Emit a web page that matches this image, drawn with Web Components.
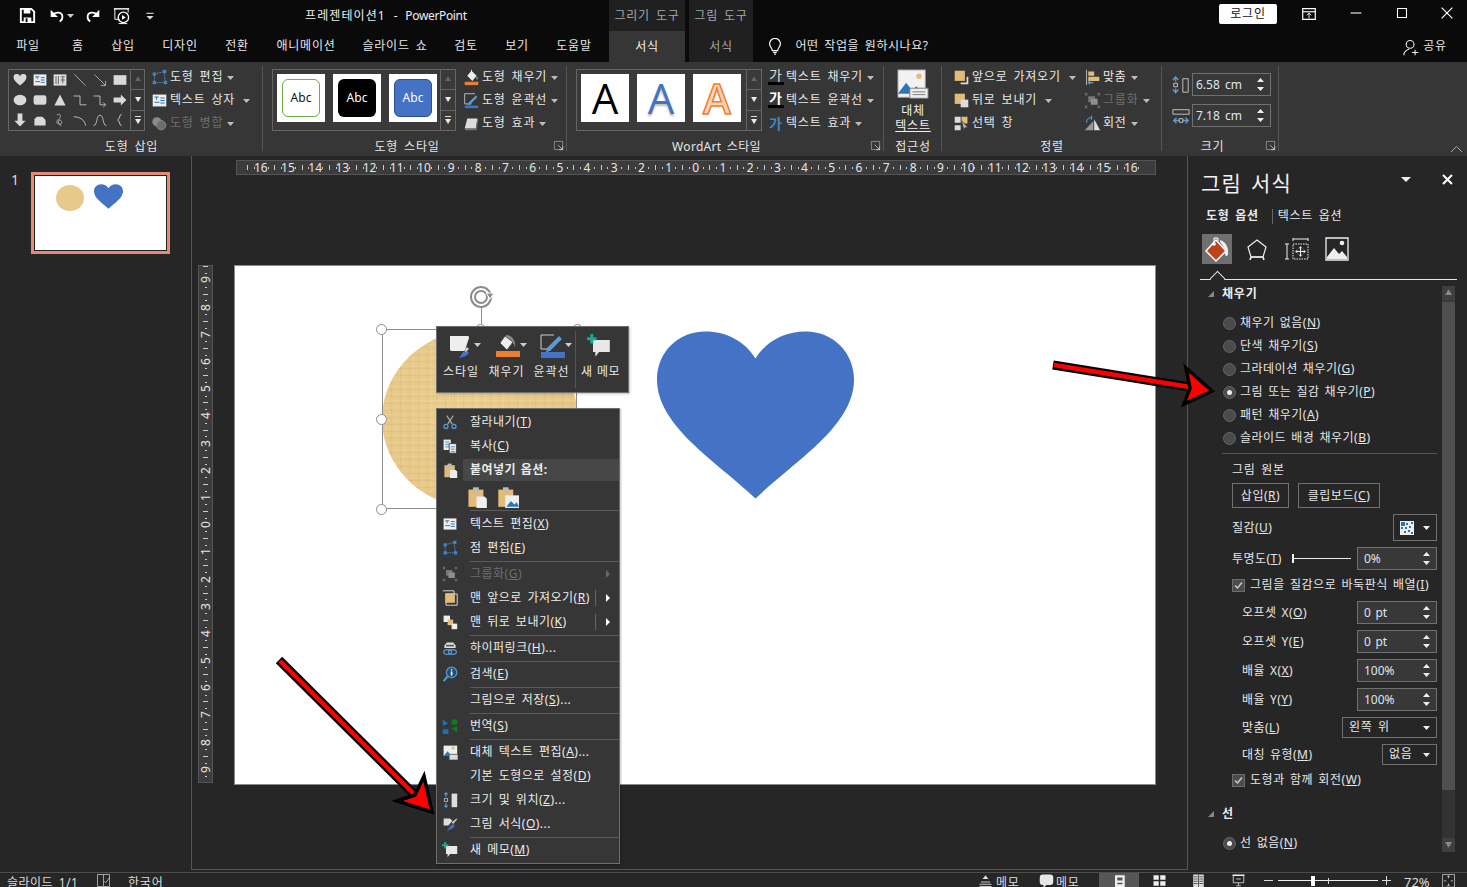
<!DOCTYPE html>
<html lang="ko"><head><meta charset="utf-8"><title>PowerPoint</title>
<style>html,body{margin:0;padding:0;background:#262626;overflow:hidden}
body{font:12px/1.2 "Noto Sans","Noto Sans CJK KR",sans-serif;color:#e8e8e8;letter-spacing:.8px;word-spacing:2px}</style>
</head><body>
<pp-app></pp-app>
<script>
const W='#f2f2f2',G='#d9d9d9',B='#2e75b6',O='#ed7d31',T='#e2bb7b';
const I={
save:`<path d="M3 3h11l3 3v11H3z" fill="none" stroke="#fff" stroke-width="2"/><path d="M6 3h7v5H6zM6 12h8v5H6z" fill="#fff"/><path d="M8 13h2v4H8z" fill="#0a0a0a"/>`,
undo:`<path d="M5 9c3-4 11-4 11 2 0 2-1 4-3 5" fill="none" stroke="#fff" stroke-width="2"/><path d="M3 3v8h8z" fill="#fff"/>`,
redo:`<path d="M15 9c-3-4-11-4-11 2 0 2 1 4 3 5" fill="none" stroke="#fff" stroke-width="2"/><path d="M17 3v8H9z" fill="#fff"/>`,
showq:`<path d="M2 3h16" stroke="#fff" stroke-width="1.5"/><path d="M3 3v11h5M17 3v4" fill="none" stroke="#fff"/><circle cx="12" cy="12" r="5.5" fill="none" stroke="#fff" stroke-width="1.4"/><path d="M10.5 9.5l4 2.5-4 2.5z" fill="#fff"/><path d="M7 18.5h9" stroke="#fff"/>`,
more:`<path d="M6 7h8" stroke="#ddd" stroke-width="1.2"/><path d="M6 10h8l-4 4z" fill="#ddd"/>`,
ribopt:`<path d="M3 4h14v12H3z" fill="none" stroke="#fff" stroke-width="1.3"/><path d="M3 7.5h14" stroke="#fff" stroke-width="1.3"/><path d="M10 9v6M7.5 11.5L10 9l2.5 2.5" fill="none" stroke="#fff"/>`,
min:`<path d="M4 10h12" stroke="#fff" stroke-width="1.2"/>`,
max:`<path d="M5 5h10v10H5z" fill="none" stroke="#fff" stroke-width="1.2"/>`,
close:`<path d="M4 4l12 12M16 4L4 16" stroke="#fff" stroke-width="1.3"/>`,
bulb:`<path d="M7 14c0-3-3-4-3-7.500a6 6 0 0 1 12 0C16 10 13 11 13 14z" fill="none" stroke="#fff" stroke-width="1.3"/><path d="M8 16h4M9 18h2" stroke="#fff" stroke-width="1.3"/>`,
user:`<circle cx="9" cy="6" r="4.300" fill="none" stroke="#eee" stroke-width="1.200"/><path d="M2 18c0-4 3-6 6-7" fill="none" stroke="#eee" stroke-width="1.200"/><path d="M11 15h7M14.500 12v6" stroke="#eee" stroke-width="1.200"/>`,
heart:`<path d="M10 17C5 13 2 10 2 7a4 4 0 0 1 8-1 4 4 0 0 1 8 1c0 3-3 6-8 10z" fill="${G}"/>`,
txh:`<path d="M2 3h16v14H2z" fill="#eee"/><path d="M4 6h5M6.500 6v3M4 12h6M11 7h5M11 10h5M11 13h5" stroke="#2e75b6" stroke-width="1.200"/>`,
txv:`<path d="M2 3h16v14H2z" fill="#ddd"/><path d="M5 5v10M8 5v10M11 6h5M13.500 6v8" stroke="#555" stroke-width="1.100"/><path d="M11 10h5" stroke="#2e75b6" stroke-width="1.500"/>`,
line:`<path d="M3 3l14 14" stroke="#bbb"/>`,
aline:`<path d="M3 3l14 14M17 11v6h-6" fill="none" stroke="#bbb"/>`,
rect:`<path d="M2 4h16v12H2z" fill="${G}"/>`,
ell:`<ellipse cx="10" cy="10" rx="8" ry="6.500" fill="${G}"/>`,
rrect:`<rect x="2" y="4" width="16" height="12" rx="3" fill="${G}"/>`,
tri:`<path d="M10 3l7 14H3z" fill="${G}"/>`,
elbow:`<path d="M2 5h8v11h8" fill="none" stroke="#bbb" stroke-width="1.200"/>`,
elbowa:`<path d="M2 5h8v11h7M14 13l3 3-3 3" fill="none" stroke="#bbb" stroke-width="1.200"/>`,
rarrow:`<path d="M2 7h9V3l7 7-7 7v-4H2z" fill="${G}"/>`,
darrow:`<path d="M7 2h6v9h4l-7 7-7-7h4z" fill="${G}"/>`,
snip:`<path d="M3 17V9l3-3h7l4 4v7z" fill="${G}"/>`,
scrib:`<path d="M6 4c3-3 7 0 3 4s-4 6 0 7 4-4 1-5-3 6 2 7" fill="none" stroke="#bbb" stroke-width="1.100"/>`,
arc:`<path d="M2 6c8 0 14 4 15 11" fill="none" stroke="#bbb" stroke-width="1.200"/>`,
curve:`<path d="M2 17c5 0 3-13 8-13s3 13 8 13" fill="none" stroke="#bbb" stroke-width="1.200"/>`,
brace:`<path d="M12 3c-3 0-2 6-5 7 3 1 2 7 5 7" fill="none" stroke="#ccc" stroke-width="1.200"/>`,
pts:`<path d="M4 6l11-3 2 13-13 0z" fill="none" stroke="#5b9bd5" stroke-dasharray="2 1"/><path d="M2 4h4v4H2zM14 1h4v4h-4zM2 14h4v4H2zM15 14h4v4h-4z" fill="#3a85d0"/>`,
merge:`<circle cx="7" cy="8" r="5.500" fill="#8a8a8a"/><circle cx="12" cy="12" r="5.500" fill="#6d6d6d" stroke="#8a8a8a"/>`,
fill:`<path d="M10 2l6 6-5 6-6-6z" fill="#eee"/><path d="M10 7V1" stroke="#eee"/><path d="M16 8c1 2 2 3 1 4s-2-1-1-4z" fill="#6fa8dc"/><path d="M2 15h16v4H2z" fill="${O}"/>`,
pen:`<path d="M2 2h12M2 2v12h8" fill="none" stroke="#ccc"/><path d="M6 13l9-9 2 2-9 9-3 1z" fill="#5b9bd5"/><path d="M2 16h16v3H2z" fill="#4472c4"/>`,
effect:`<path d="M5 4h12l-2 12H2z" fill="#ddd"/><path d="M2 16h13l2-12 1 1-2 13H3z" fill="#777"/>`,
front:`<path d="M2 2h12v12H2z" fill="${T}"/><path d="M16 9h2v9H9v-2h7z" fill="#ddd"/>`,
back:`<path d="M2 2h12v12H2z" fill="${T}"/><path d="M9 9h9v9H9z" fill="#ddd"/>`,
pane:`<path d="M2 2h7v7H2zM2 12h7v6H2z" fill="#ddd"/><path d="M10 2h7v8h-7z" fill="${T}"/><path d="M10 7l8 8-4 0-1 4z" fill="#bbb" stroke="#333"/>`,
align:`<path d="M3 1v18" stroke="#ccc"/><path d="M5 3h7v5H5zM5 9h13v5H5z" fill="${T}"/><path d="M11 16H5M7 14l-2 2 2 2" fill="none" stroke="#5b9bd5" stroke-width="1.300"/>`,
group:`<path d="M5 5h8v7H5z" fill="#777"/><path d="M8 8h8v7H8z" fill="#8f8f8f"/><path d="M1 1h3v3H1zM16 1h3v3h-3zM1 16h3v3H1zM16 16h3v3h-3z" fill="#666"/>`,
rotate:`<path d="M11 7v11H1z" fill="#999"/><path d="M12 5l7 13h-7z" fill="#ddd"/><path d="M3 9c0-4 3-6 6-6M9 1v4h-1" fill="none" stroke="#5b9bd5" stroke-width="1.300"/>`,
hsize:`<path d="M12 3h6v15h-6z" fill="none" stroke="#ccc"/><path d="M4 6V2M1 4.500L4 1l3 3.500M4 14v4M1 15l3 3.500 3-3.500" fill="none" stroke="#5b9bd5" stroke-width="1.500"/><path d="M2 8h4v4H2z" fill="none" stroke="#ccc"/>`,
wsize:`<path d="M1 3h18v5H1z" fill="none" stroke="#ccc"/><path d="M3 15h14M5 12l-3 3 3 3M15 12l3 3-3 3" fill="none" stroke="#5b9bd5" stroke-width="1.500"/><path d="M8 13h4v4H8z" fill="#333" stroke="#ccc"/>`,
launch:`<path d="M2 2h12v12H2z" fill="none" stroke="#aaa"/><path d="M7 7l7 7M14 9v5H9" fill="none" stroke="#ddd"/>`,
alt:`<path d="M1 1h30v30H1z" fill="#f2f2f2" stroke="#999"/><circle cx="24" cy="8" r="3" fill="${T}"/><path d="M1 27l9-12 7 9 4-5 8 8z" fill="#2e75b6"/><path d="M14 21h20v11H14z" fill="#eee" stroke="#777"/><path d="M17 25h14M17 28h14" stroke="#777"/>`,
style:`<path d="M1 2h18c1 0 1 1 1 2l-4 12c-1 1-2 1-3 1H3c-2 0-2-1-2-2z" fill="#eee"/><path d="M10 24l4-6 3-2 3 3-3 3z" fill="#4472c4"/><path d="M15 16l3-3 2 2-3 3z" fill="#ccc"/>`,
mfill:`<path d="M10 2l8 6-6 8-7-7z" fill="#eee" stroke="#555"/><path d="M11 1c6 0 10 6 9 12-1-4-4-8-9-10z" fill="#888"/><path d="M1 17h24v6H1z" fill="${O}"/>`,
mpen:`<path d="M1 1h13M1 1v14h8" fill="none" stroke="#ccc"/><path d="M7 14L19 2l3 3-12 12-4 1z" fill="#5b9bd5"/><path d="M1 18h24v6H1z" fill="#4472c4"/>`,
memo:`<path d="M5 5h14v10H10l-3 4v-4H5z" fill="#e8e8e8"/><path d="M4 0v8M0 4h8" stroke="#1fa58b" stroke-width="2.500"/>`,
cut:`<path d="M6 2l7 11M14 2L7 13" stroke="#aaa" stroke-width="1.500"/><circle cx="5" cy="15.500" r="2.500" fill="none" stroke="#5b9bd5" stroke-width="1.500"/><circle cx="15" cy="15.500" r="2.500" fill="none" stroke="#5b9bd5" stroke-width="1.500"/>`,
copy:`<path d="M2 2h9v13H2z" fill="#eee"/><path d="M4 5h5M4 8h5M4 11h5" stroke="#2e75b6"/><path d="M9 7h9v12H9z" fill="#eee" stroke="#333"/><path d="M11 11h5M11 14h5M11 17h5" stroke="#2e75b6"/>`,
paste:`<path d="M3 4h13v15H3z" fill="${T}"/><path d="M7 2h5v4H7z" fill="#bbb"/><path d="M10 10h7l2 2v8h-9z" fill="#eee"/>`,
pastep:`<path d="M2 4h13v15H2z" fill="${T}"/><path d="M6 2h5v4H6z" fill="#bbb"/><path d="M8 9h12v11H8z" fill="#eee"/><path d="M9 19l4-5 3 3 2-2 2 4z" fill="#2e75b6"/>`,
gfront:`<path d="M1 1h14v14M5 5h14v14H5z" fill="none" stroke="#ddd" stroke-width="1.200"/><path d="M4 4h12v12H4z" fill="${T}"/>`,
gback:`<path d="M2 2h8v8H2z" fill="#eee"/><path d="M7 7h7v7H7z" fill="${T}"/><path d="M12 12h7v7h-7z" fill="#eee"/>`,
link:`<path d="M6 3h8l3 4v3H3V7z" fill="#ddd"/><path d="M5 7h10" stroke="#555" stroke-width="2"/><ellipse cx="7" cy="15" rx="5" ry="3" fill="none" stroke="#5b9bd5" stroke-width="1.500"/><ellipse cx="13" cy="15" rx="5" ry="3" fill="none" stroke="#5b9bd5" stroke-width="1.500"/>`,
search:`<circle cx="12" cy="8" r="6.500" fill="#1f4e79" stroke="#5b9bd5" stroke-width="1.500"/><path d="M7 13l-5 6" stroke="#5b9bd5" stroke-width="2.500"/><path d="M12 7v5M12 4v1.500" stroke="#fff" stroke-width="2"/>`,
trans:`<path d="M1 2l7 5-7 3zM1 14h7v6H1z" fill="#1f6fb5"/><path d="M19 18l-7-5 7-3zM12 2h7v6h-7z" fill="#0f7a1f"/>`,
size:`<path d="M12 2h7v17h-7z" fill="#ddd"/><path d="M5 1v5M3 3l2-2 2 2M5 19v-5M3 17l2 2 2-2" fill="none" stroke="#5b9bd5" stroke-width="1.500"/><path d="M3 8h4v4H3z" fill="none" stroke="#ccc"/>`,
format:`<path d="M2 3h8l3 3-5 6H2z" fill="#ddd"/><path d="M6 19l5-7 3-2 2 2-2 3z" fill="#4472c4"/><path d="M12 8l6-5 1 1-5 6z" fill="#ccc"/>`,
pfill:`<path d="M13 5l10 11-10 10L3 16z" fill="#c0421c" stroke="#fff" stroke-width="1.500"/><circle cx="11" cy="9" r="1.800" fill="#fff"/><path d="M11 9V3h4v3" fill="none" stroke="#fff"/><path d="M17 5c6 2 9 8 8 14-1 3-2 3-3 0 0-5-2-9-5-12z" fill="#eee"/>`,
ppent:`<path d="M12 3l9 7-3 10H6L3 10z" fill="none" stroke="#eee" stroke-width="1.200"/><path d="M6 20l-1 3M18 20l1 3M6 20h12" stroke="#eee" stroke-width="1.600"/>`,
psize:`<path d="M8 7h15v15H8z" fill="none" stroke="#eee" stroke-dasharray="1.500 1"/><path d="M8 2h15M8 1v3M23 1v3M2 7v15M0 7h4M0 22h4" fill="none" stroke="#eee"/><path d="M15.500 10v9M11 14.500h9" stroke="#eee"/><path d="M14 11.500l1.500-2 1.500 2M14 17.500l1.500 2 1.500-2M12.500 13l-2 1.500 2 1.500M18.500 13l2 1.500-2 1.500" fill="none" stroke="#eee" stroke-width=".8"/>`,
ppic:`<path d="M1 1h22v22H1z" fill="#262626" stroke="#eee" stroke-width="1.300"/><circle cx="17" cy="6" r="2.300" fill="#eee"/><path d="M2 20l7-9 5 6 3-3 5 6v2H2z" fill="#eee"/>`,
note:`<path d="M2 2h8v16H2z" fill="none" stroke="#ccc"/><path d="M10 2h8v16h-8" fill="none" stroke="#ccc"/><path d="M11 11l2 2 5-7" fill="none" stroke="#ccc"/>`,
notes:`<path d="M4 12h12M2 15h16M2 18h16" stroke="#ddd" stroke-width="1.200"/><path d="M10 3l4 5H6z" fill="#ddd"/>`,
cmt:`<rect x="1" y="2" width="18" height="14" rx="4" fill="#e6e6e6"/><path d="M6 14v6l5-5z" fill="#e6e6e6"/>`,
normal:`<path d="M4 3h13v16H4z" fill="#eee"/><path d="M7 6h7v4H7z" fill="#555"/><path d="M7 14h7" stroke="#555" stroke-width="2"/>`,
sorter:`<path d="M2 3h7v6H2zM11 3h7v6h-7zM2 11h7v6H2zM11 11h7v6h-7z" fill="#eee"/>`,
read:`<path d="M3 2h14v17H3z" fill="#ddd"/><path d="M10 2v17" stroke="#333"/><path d="M4 5h5M11 5h5M4 8h5M11 8h5M4 11h5M11 11h5M4 14h5M11 14h5" stroke="#333"/>`,
show:`<path d="M2 3h16" stroke="#eee" stroke-width="2"/><path d="M3 4v9h14V4" fill="none" stroke="#eee"/><path d="M7 8h6" stroke="#eee"/><path d="M10 13v3M7 17h6" stroke="#eee"/>`,
fit:`<path d="M2 2h16v17H2z" fill="none" stroke="#ccc"/><path d="M10 4v3M8.500 5L10 3.500 11.500 5M10 17v-3M8.500 16l1.500 1.500 1.500-1.500M4 10.500h3M13 10.500h3" fill="none" stroke="#ddd"/>`,
pic2:`<path d="M2 2h17v13H2z" fill="#eee"/><circle cx="14" cy="5" r="2" fill="${T}"/><path d="M2 15l5-6 5 6z" fill="#2e75b6"/><path d="M9 13h11v7H9z" fill="#ddd" stroke="#555"/>`,
};
const ico=(n,s=18,vb=20,st='')=>`<svg width="${s}" height="${s}" viewBox="0 0 ${vb} ${vb}" style="display:block;flex:none;${st}">${I[n]}</svg>`;
function def(tag,css,fn){customElements.define(tag,class extends HTMLElement{connectedCallback(){if(this.shadowRoot)return;const r=this.attachShadow({mode:'open'});r.innerHTML=`<style>${css}</style>`+fn(this)}})}
const a=(e,k,d='')=>e.getAttribute(k)??d;
const car=`<svg width="7" height="4" viewBox="0 0 7 4" style="flex:none"><path d="M0 0h7L3.500 4z" fill="currentColor"/></svg>`;

def('pp-titlebar',`:host{display:block;height:31px;background:#0a0a0a;position:relative}
.r{display:flex;align-items:center;height:31px;padding-left:18px;box-sizing:border-box}
.t{position:absolute;left:305px;top:9px;white-space:nowrap;letter-spacing:1.100px;word-spacing:0;color:#eee;display:flex;gap:8px}
.t span{letter-spacing:-.35px}
.ctx{position:absolute;top:0;height:31px;padding-top:2px;box-sizing:border-box;background:#202020;color:#a6a6a6;display:flex;align-items:center;justify-content:center}`,()=>`<div class=r>
<span style="margin-right:11px">${ico('save',19)}</span><span style="margin-right:1px">${ico('undo',18)}</span><span style="color:#ccc;margin-right:10px;display:flex">${car}</span><span style="margin-right:10px">${ico('redo',18)}</span><span style="margin-right:10px">${ico('showq',19)}</span>${ico('more',18)}</div>
<div class=t>프레젠테이션1<span>-</span><span>PowerPoint</span></div>
<div class=ctx style="left:609px;width:76px">그리기 도구</div><div class=ctx style="left:689px;width:64px">그림 도구</div>
<div style="position:absolute;left:1219px;top:4px;width:58px;height:20px;background:#fff;color:#111;border-radius:2px;text-align:center;line-height:19px">로그인</div>
<div style="position:absolute;left:1300px;top:5px">${ico('ribopt',18)}</div>
<div style="position:absolute;left:1347px;top:4px">${ico('min',18)}</div>
<div style="position:absolute;left:1393px;top:4px">${ico('max',18)}</div>
<div style="position:absolute;left:1438px;top:4px">${ico('close',18)}</div>`);

def('pp-tabs',`:host{display:block;height:31px;background:#0a0a0a;position:relative;font-size:12px}
.t{position:absolute;top:8px;transform:translateX(-50%);white-space:nowrap;color:#e6e6e6}`,()=>{
const tabs=[['파일',28],['홈',78],['삽입',123],['디자인',180],['전환',237],['애니메이션',306],['슬라이드 쇼',395],['검토',466],['보기',517],['도움말',574]];
return tabs.map(([t,x])=>`<span class=t style="left:${x}px">${t}</span>`).join('')+`
<div style="position:absolute;left:609px;top:0;width:76px;height:31px;background:#363636;text-align:center;line-height:31px;color:#f2f2f2">서식</div>
<div style="position:absolute;left:689px;top:0;width:64px;height:31px;background:#202020;text-align:center;line-height:31px;color:#a6a6a6">서식</div>
<div style="position:absolute;left:766px;top:7px">${ico('bulb',18)}</div>
<span class=t style="left:862px;letter-spacing:.55px">어떤 작업을 원하시나요?</span>
<div style="position:absolute;left:1402px;top:8px">${ico('user',18)}</div>
<span class=t style="left:1435px">공유</span>`});

def('pp-group',`:host{display:flex;flex-direction:column;height:94px;box-sizing:border-box;position:relative;flex:none}
.c{height:73px;padding-top:7px;box-sizing:border-box;display:flex;align-items:flex-start}
.l{height:21px;line-height:23px;text-align:center;color:#e6e6e6;white-space:nowrap}
.s{position:absolute;right:0;top:4px;bottom:5px;width:1px;background:#555}
.la{position:absolute;right:3px;bottom:5px}`,e=>`<div class=c style="padding-left:${a(e,'pl','0')}px;${a(e,'cs')}"><slot></slot></div><div class=l style="padding-right:${a(e,'lpr','0')}px;${a(e,'ls')}">${a(e,'label')}</div><div class=s></div>${e.hasAttribute('launch')?`<div class=la>${ico('launch',11,16)}</div>`:''}`);

def('pp-rbtn',`:host{display:flex;align-items:center;height:23px;white-space:nowrap;color:#e8e8e8}
:host([off]){color:#6e6e6e}
.i{width:19px;flex:none;display:flex;justify-content:center;margin-right:1px}.c{display:flex;color:#bbb}
.g{display:block;font-size:14px;font-weight:400;line-height:12px;letter-spacing:0;text-align:center;border-bottom:3px solid #000;width:16px;height:13px;overflow:hidden;margin-top:-2px;color:#ddd}
.g2{font-size:14px;font-weight:700;line-height:16px;letter-spacing:0;color:#3d85c6}`,e=>{
const g=a(e,'glyph');const ic=g?`<span class="${g==='b'?'g2':'g'}"${g==='o'?' style="color:#fff;font-weight:700"':''}>가</span>`:ico(a(e,'n'),+a(e,'s',17));
return `<span class=i>${ic}</span><slot></slot>${e.hasAttribute('nocar')?'':`<span class=c style="margin-left:${a(e,'cg','4')}px">${car}</span>`}`});

def('pp-col',`:host{display:flex;flex-direction:column;flex:none}`,e=>`<style>:host{margin-left:${a(e,'ml','0')}px;width:${a(e,'w','auto')}${a(e,'w')?'px':''}}</style><slot></slot>`);

const scrollCol=`<div class=sc><div style="color:#666">▲</div><div>▼</div><div><span style="border-top:1px solid #ddd;padding-top:1px;line-height:6px">▼</span></div></div>`;
const scCss=`.sc{width:14px;display:flex;flex-direction:column;border-left:1px solid #666;flex:none}
.sc div{flex:1;display:flex;align-items:center;justify-content:center;font-size:6px;color:#eee;border-bottom:1px solid #666;letter-spacing:0}.sc div:last-child{border-bottom:0}`;

def('pp-shapes',`:host{display:flex;width:137px;height:62px;border:1px solid #666;box-sizing:border-box;flex:none}
.g{display:grid;grid-template-columns:repeat(6,20px);grid-auto-rows:20px;width:121px;padding-left:1px}.g>div{display:flex;align-items:center;justify-content:center}${scCss}`,()=>{
const n='heart txh txv line aline rect ell rrect tri elbow elbowa rarrow darrow snip scrib arc curve brace'.split(' ');
return `<div class=g>${n.map(x=>`<div>${ico(x,16)}</div>`).join('')}</div>${scrollCol}`});

def('pp-gallery',`:host{display:flex;height:62px;border:1px solid #666;box-sizing:border-box;flex:none;background:#3a3a3a}
.g{display:flex;flex:1;gap:8px;padding:4px 0 0 4px}
.s{width:48px;height:48px;background:#fff;display:flex;align-items:center;justify-content:center;flex:none}
.b{width:38px;height:38px;border-radius:6px;box-sizing:border-box;display:flex;align-items:center;justify-content:center;font-size:12px;letter-spacing:0}
.w{font:400 42px/48px "Open Sans",sans-serif;letter-spacing:0}${scCss}`,e=>{
const st=a(e,'kind')==='word';
const inner=st?`<div class=s><span class=w style="color:#000">A</span></div><div class=s><span class=w style="color:#4472c4;text-shadow:0 2px 2px #bbb">A</span></div><div class=s><span class=w style="color:#fbd5b5;-webkit-text-stroke:1.5px #ed7d31;font-weight:600">A</span></div>`
:`<div class=s><div class=b style="border:1.5px solid #70ad47;color:#111">Abc</div></div><div class=s><div class=b style="background:#000;color:#fff">Abc</div></div><div class=s><div class=b style="background:#4472c4;border:1px solid #2f528f;color:#fff">Abc</div></div>`;
return `<style>:host{width:${a(e,'w')}px}</style><div class=g>${inner}</div>${scrollCol}`});

def('pp-spin',`:host{display:flex;box-sizing:border-box;border:1px solid #707070;background:#383838;align-items:center;color:#dbe6f3;letter-spacing:0;position:relative;flex:none}
.v{flex:1;padding-top:1px}.a{display:flex;flex-direction:column;gap:5px;margin-right:6px;color:#eee}
svg{display:block}`,e=>{const up=`<svg width="7" height="4" viewBox="0 0 7 4"><path d="M0 4h7L3.500 0z" fill="currentColor"/></svg>`;
return `<style>:host{width:${a(e,'w','80')}px;height:${a(e,'h','23')}px}</style><span class=v style="padding-left:${a(e,'pd','6')}px">${a(e,'v')}</span><span class=a>${up}${car}</span>`});

def('pp-ribbon',`:host{display:flex;height:94px;background:#363636;position:relative}
.alt{display:flex;flex-direction:column;align-items:center;width:100%;line-height:15px;color:#f0f0f0}`,()=>`
<pp-group style="width:263px" label="도형 삽입" pl="8">
<pp-shapes></pp-shapes>
<pp-col ml="5" style="margin-top:-3px"><pp-rbtn n="pts">도형 편집</pp-rbtn><pp-rbtn n="txh" cg="8">텍스트 상자</pp-rbtn><pp-rbtn n="merge" off>도형 병합</pp-rbtn></pp-col>
</pp-group>
<pp-group style="width:304px" label="도형 스타일" lpr="16" pl="9" launch>
<pp-gallery w="184"></pp-gallery>
<pp-col ml="6" style="margin-top:-3px"><pp-rbtn n="fill">도형 채우기</pp-rbtn><pp-rbtn n="pen">도형 윤곽선</pp-rbtn><pp-rbtn n="effect">도형 효과</pp-rbtn></pp-col>
</pp-group>
<pp-group style="width:317px" label="WordArt 스타일" lpr="18" ls="letter-spacing:.3px" pl="9" launch>
<pp-gallery w="186" kind="word"></pp-gallery>
<pp-col ml="4" style="margin-top:-3px"><pp-rbtn glyph="t">텍스트 채우기</pp-rbtn><pp-rbtn glyph="o">텍스트 윤곽선</pp-rbtn><pp-rbtn glyph="b">텍스트 효과</pp-rbtn></pp-col>
</pp-group>
<pp-group style="width:58px" label="접근성" cs="justify-content:center">
<div class=alt><span style="margin:0 0 2px">${ico('alt',32,35)}</span><span>대체</span><span style="text-decoration:underline">텍스트</span></div>
</pp-group>
<pp-group style="width:220px" label="정렬" pl="10">
<pp-col w="131" style="margin-top:-3px"><pp-rbtn n="front" cg="8">앞으로 가져오기</pp-rbtn><pp-rbtn n="back" cg="8">뒤로 보내기</pp-rbtn><pp-rbtn n="pane" nocar>선택 창</pp-rbtn></pp-col>
<pp-col style="margin-top:-3px"><pp-rbtn n="align">맞춤</pp-rbtn><pp-rbtn n="group" off>그룹화</pp-rbtn><pp-rbtn n="rotate">회전</pp-rbtn></pp-col>
</pp-group>
<pp-group style="width:117px" label="크기" lpr="16" pl="10" launch>
<pp-col><div style="display:flex;align-items:center;gap:2px;margin-bottom:8px;margin-top:4px">${ico('hsize',18)}<pp-spin w="79" pd="3" v="6.58 cm"></pp-spin></div>
<div style="display:flex;align-items:center;gap:2px">${ico('wsize',18)}<pp-spin w="79" pd="3" v="7.18 cm"></pp-spin></div></pp-col>
</pp-group>
<svg style="position:absolute;right:5px;bottom:4px" width="11" height="6" viewBox="0 0 11 6"><path d="M0 6l5.500-5.500L11 6" fill="none" stroke="#aaa"/></svg>`);

def('pp-thumbs',`:host{display:block;width:191px;height:714px;box-sizing:border-box;position:relative;flex:none}
.n{position:absolute;left:11px;top:16px;font-size:14px;color:#ddd;letter-spacing:0}
.f{margin:16px 0 0 31px;width:139px;height:82px;box-sizing:border-box;border:3px solid #e68a77;background:#fff;box-shadow:inset 0 0 0 1px #222;position:relative}
.c{position:absolute;left:22px;top:10px;width:28px;height:26px;border-radius:50%;background:#e6c98d}`,()=>`<div class=n>1</div><div class=f><div class=c></div><svg style="position:absolute;left:60px;top:9px" width="29" height="25" viewBox="0 0 197 167"><path d="M98.500 167C60 130 0 95 0 48 0 20 22 0 48 0c22 0 40 10 50.500 27C109 10 127 0 149 0c26 0 48 20 48 48 0 47-60 82-98.500 119z" fill="#4472c4"/></svg></div>`);

def('pp-ruler',`:host{display:flex;background:#3c3c3c;border:1px solid #555;box-sizing:border-box;color:#e6e6e6;font-size:12px;letter-spacing:0;flex:none;overflow:hidden;line-height:13px}
.u{flex:none;display:flex;align-items:center;justify-content:center}
span{display:block}`,e=>{const v=e.hasAttribute('v');const ns=[];const m=v?9:16;for(let i=m;i>=0;i--)ns.push(i);for(let i=1;i<=m;i++)ns.push(i);
const tick=v?`background:linear-gradient(#ccc,#ccc) 50% 0/5px 1px no-repeat,linear-gradient(#ccc,#ccc) 50% 6.800px/2px 1px no-repeat,linear-gradient(#ccc,#ccc) 50% 20.400px/2px 1px no-repeat;`
:`background:linear-gradient(#ccc,#ccc) 0 50%/1px 5px no-repeat,linear-gradient(#ccc,#ccc) 6.800px 50%/1px 2px no-repeat,linear-gradient(#ccc,#ccc) 20.400px 50%/1px 2px no-repeat;`;
return `<style>:host{${v?'flex-direction:column;width:15px;height:518px;padding-top:.4px':'width:920px;height:15px;padding-left:10.200px'}}</style>`+ns.map(n=>`<div class=u style="${v?'height':'width'}:27.2px;${v?'width:13px':'height:13px'};${tick}"><span style="${v?'transform:rotate(-90deg)':''}">${n}</span></div>`).join('')});

def('pp-canvas',`:host{display:block;width:996px;height:714px;box-sizing:border-box;border-bottom:1px solid #555;position:relative;flex:none;border-left:1px solid #555}
.h{margin:4px 0 0 44px}.m{display:flex;margin:90px 0 0 6px;align-items:flex-start;gap:21px}`,()=>`<div class=h><pp-ruler></pp-ruler></div><div class=m><pp-ruler v></pp-ruler><pp-slide></pp-slide></div>`);

def('pp-slide',`:host{display:block;width:922px;height:520px;background:#fff;border:1px solid #8a8a8a;box-sizing:border-box;position:relative;flex:none}
.tex{position:absolute;left:147px;top:63px;width:196px;height:180px;border-radius:50%;
background:repeating-linear-gradient(0deg,rgba(170,130,60,.11) 0 1px,transparent 1px 3px,rgba(255,240,200,.12) 3px 4px,transparent 4px 7px),repeating-linear-gradient(90deg,rgba(170,130,60,.1) 0 1px,transparent 1px 4px,rgba(255,240,200,.1) 4px 5px,transparent 5px 9px),radial-gradient(ellipse at 45% 45%,#ebd092,#e4c483)}
.sel{position:absolute;left:147px;top:63px;width:195px;height:180px;border:1px solid #8c8c8c;box-sizing:border-box}
.h{position:absolute;width:11px;height:11px;border-radius:50%;background:#fff;border:1.500px solid #8c8c8c;box-sizing:border-box}`,()=>`
<div class=tex></div><div class=sel></div>
<div style="position:absolute;left:246px;top:42px;width:1px;height:22px;background:#8c8c8c"></div>
<svg style="position:absolute;left:234px;top:19px" width="27" height="24" viewBox="0 0 27 24"><circle cx="12" cy="12" r="10" fill="none" stroke="#8c8c8c" stroke-width="2"/><circle cx="12" cy="12" r="6" fill="none" stroke="#8c8c8c" stroke-width="2"/><path d="M17 8h8l-4 6z" fill="#8c8c8c" stroke="#fff"/></svg>
<span class=h style="left:141px;top:58px"></span><span class=h style="left:240px;top:58px"></span><span class=h style="left:337px;top:58px"></span><span class=h style="left:141px;top:148px"></span><span class=h style="left:141px;top:238px"></span>
<svg style="position:absolute;left:422px;top:65px" width="197" height="168" viewBox="0 0 197 167"><path d="M98.500 167C60 130 0 95 0 48 0 20 22 0 48 0c22 0 40 10 50.500 27C109 10 127 0 149 0c26 0 48 20 48 48 0 47-60 82-98.500 119z" fill="#4472c4"/></svg>`);

def('pp-minibar',`:host{position:absolute;left:436px;top:326px;width:193px;height:67px;background:#363636;border:1px solid #6e6e6e;box-sizing:border-box;display:flex;padding-left:1px;color:#e8e8e8;letter-spacing:1px;word-spacing:1px;box-shadow:1px 1px 2px rgba(0,0,0,.25)}
.b{display:flex;flex-direction:column;align-items:center;width:45px;padding-top:7px;box-sizing:border-box;flex:none;position:relative}
.c{position:absolute;left:36px;top:16px;color:#ccc;display:flex}.l{margin-top:5px;white-space:nowrap}
.s{width:1px;background:#555;margin:4px 1px 4px 1px}`,()=>{const b=(n,l,w)=>`<div class=b style="width:${w}px">${ico(n,26,26,'margin-left:2px')}<span class=c>${car}</span><span class=l>${l}</span></div>`;
return b('style','스타일',46)+b('mfill','채우기',45)+b('mpen','윤곽선',45)+`<div class=s></div><div class=b style="width:47px"><span style="margin-right:4px">${ico('memo',24)}</span><span class=l style="margin-top:7px;letter-spacing:.4px">새 메모</span></div>`});

def('pp-mi',`:host{display:flex;align-items:center;height:24px;color:#ececec;white-space:nowrap;position:relative;letter-spacing:.5px;word-spacing:2px}
:host([off]){color:#6e6e6e}:host([hd]){font-weight:700;background:linear-gradient(#474747,#474747) 26px 1px/156px 22px no-repeat;word-spacing:1px}
.i{width:26px;display:flex;justify-content:center;flex:none}.t{margin-left:7px}
::slotted(u){text-decoration:underline}
.sub{position:absolute;right:0;top:4px;height:16px;width:23px;border-left:1px solid #666;display:flex;align-items:center;justify-content:center}
:host([off]) .sub{border-left-color:transparent}`,e=>`<span class=i>${a(e,'n')?ico(a(e,'n'),16):''}</span><span class=t><slot></slot></span>${e.hasAttribute('sub')?`<span class=sub><svg width="4" height="8" viewBox="0 0 4 8"><path d="M0 0l4 4-4 4z" fill="${e.hasAttribute('off')?'#666':'#fff'}"/></svg></span>`:''}`);
def('pp-sep',`:host{display:block;height:1px;margin:.5px 0 .5px 33px;background:#5a5a5a}`,()=>'');

def('pp-menu',`:host{position:absolute;left:436px;top:408px;width:184px;height:456px;background:#363636;border:1px solid #6e6e6e;box-sizing:border-box;padding-top:1px;box-shadow:1px 1px 2px rgba(0,0,0,.25);display:block}
.p{height:28px;display:flex;gap:8px;padding-left:28px;align-items:center}`,()=>`
<pp-mi n="cut">잘라내기(<u>T</u>)</pp-mi><pp-mi n="copy">복사(<u>C</u>)</pp-mi><pp-mi n="paste" hd>붙여넣기 옵션:</pp-mi>
<div class=p>${ico('paste',23)}${ico('pastep',23)}</div><pp-sep style="margin-top:0;margin-bottom:1px"></pp-sep>
<pp-mi n="txh">텍스트 편집(<u>X</u>)</pp-mi><pp-mi n="pts">점 편집(<u>E</u>)</pp-mi><pp-sep></pp-sep>
<pp-mi n="group" off sub>그룹화(<u>G</u>)</pp-mi><pp-mi n="gfront" sub>맨 앞으로 가져오기(<u>R</u>)</pp-mi><pp-mi n="gback" sub>맨 뒤로 보내기(<u>K</u>)</pp-mi><pp-sep></pp-sep>
<pp-mi n="link">하이퍼링크(<u>H</u>)...</pp-mi><pp-sep></pp-sep><pp-mi n="search">검색(<u>E</u>)</pp-mi><pp-sep></pp-sep>
<pp-mi>그림으로 저장(<u>S</u>)...</pp-mi><pp-sep></pp-sep><pp-mi n="trans">번역(<u>S</u>)</pp-mi><pp-sep></pp-sep>
<pp-mi n="pic2">대체 텍스트 편집(<u>A</u>)...</pp-mi><pp-mi>기본 도형으로 설정(<u>D</u>)</pp-mi><pp-mi n="size">크기 및 위치(<u>Z</u>)...</pp-mi><pp-mi n="format">그림 서식(<u>O</u>)...</pp-mi><pp-sep></pp-sep>
<pp-mi n="memo">새 메모(<u>M</u>)</pp-mi>`);

def('pp-radio',`:host{display:flex;align-items:center;height:23px;padding-left:21px;color:#e6e6e6;white-space:nowrap;letter-spacing:.5px;word-spacing:1.500px}
.r{width:13px;height:13px;border-radius:50%;background:#4b4b4b;border:1px solid #666;box-sizing:border-box;margin-right:4px;display:flex;align-items:center;justify-content:center;flex:none}
.r i{width:5px;height:5px;border-radius:50%;background:#eee}::slotted(u){text-decoration:underline}`,e=>`<span class=r>${e.hasAttribute('on')?'<i></i>':''}</span><slot></slot>`);
def('pp-check',`:host{display:flex;align-items:center;height:23px;padding-left:30px;color:#e6e6e6;white-space:nowrap;letter-spacing:.55px;word-spacing:1.500px}
.c{width:13px;height:13px;background:#4b4b4b;border:1px solid #6e6e6e;box-sizing:border-box;margin-right:5px;flex:none;display:flex}`,()=>`<span class=c><svg width="11" height="11" viewBox="0 0 11 11"><path d="M2 5.500l2.500 2.500L9 2.500" fill="none" stroke="#ccc" stroke-width="1.500"/></svg></span><slot></slot>`);
def('pp-field',`:host{display:flex;align-items:center;color:#e6e6e6;white-space:nowrap;letter-spacing:.45px;word-spacing:1.500px}
::slotted([slot=l]){padding-top:2px}
.ctl{margin-left:auto;display:flex}`,e=>`<style>:host{height:${a(e,'h','23')}px;padding-left:${a(e,'pl','40')}px;margin-top:${a(e,'mt','6')}px}</style><slot name=l></slot><span class=ctl><slot></slot></span>`);
def('pp-drop',`:host{display:flex;align-items:center;box-sizing:border-box;border:1px solid #707070;padding:0 6px;color:#e6e6e6;flex:none;letter-spacing:.8px}
span{margin-left:auto;display:flex;color:#eee}`,e=>`<style>:host{width:${a(e,'w')}px;height:${a(e,'h','22')}px}</style><slot></slot><span>${car}</span>`);
def('pp-head',`:host{display:flex;align-items:center;height:16px;font-weight:700;color:#eee;padding-left:6px}
svg{margin-right:8px}`,()=>`<svg width="6" height="6" viewBox="0 0 6 6"><path d="M6 0v6H0z" fill="#888"/></svg><slot></slot>`);

def('pp-panel',`:host{display:block;width:280px;height:714px;box-sizing:border-box;border-left:1px solid #555;padding-left:14px;position:relative;flex:none}
.tt{font-size:21px;height:34px;line-height:34px;margin-top:10px;color:#f2f2f2;letter-spacing:1.300px;word-spacing:2px;margin-left:-1px}
.x{position:absolute;top:20px}.tabs{display:flex;align-items:center;height:20px;margin:6px 0 0 4px;white-space:nowrap}
.ics{display:flex;height:30px;margin-top:8px;gap:10px}.ics div{width:30px;height:30px;display:flex;align-items:center;justify-content:center}
.ln{margin:15px 9px 0 -2px;height:1px;background:#e6e6e6;width:257px;position:relative}
.nt{position:absolute;left:12px;top:-6px;width:10px;height:10px;background:#262626;border:1px solid #e6e6e6;border-width:1px 0 0 1px;transform:rotate(45deg)}
.b{display:flex;margin-top:6px}.ct{width:235px;flex:none}
.sb{width:13px;margin-left:5px;height:566px;background:#3a3a3a;display:flex;flex-direction:column;flex:none;color:#8a8a8a;font-size:7px;letter-spacing:0}
.sb i{font-style:normal;height:14px;background:#3f3f3f;display:flex;align-items:center;justify-content:center;flex:none}.sb b{height:488px;margin-top:2px;background:#4f4f4f;display:block}
.hr{height:1px;background:#555;margin:3px 0 0 20px}.lb{padding-left:30px;height:22px;line-height:24px;margin-top:4px;letter-spacing:.7px;word-spacing:2px;color:#e6e6e6}
.bt{display:flex;gap:9px;padding-left:30px;margin-top:3px}.bt div{height:25px;border:1px solid #707070;box-sizing:border-box;line-height:23px;text-align:center;color:#e6e6e6;letter-spacing:.5px}
u{text-decoration:underline}
.sl{position:relative;width:59px;height:1px;background:#eee;margin-right:6px;align-self:center}.sl i{position:absolute;left:0;top:-4px;width:2px;height:9px;background:#eee}`,()=>`
<div class=tt>그림 서식</div>
<svg class=x style="left:213px;top:21px" width="10" height="5" viewBox="0 0 10 5"><path d="M0 0h10L5 5z" fill="#eee"/></svg>
<svg class=x style="left:254px;top:18px" width="11" height="11" viewBox="0 0 11 11"><path d="M1 1l9 9M10 1l-9 9" stroke="#fff" stroke-width="2"/></svg>
<div class=tabs><b style="font-size:12px;letter-spacing:.7px">도형 옵션</b><span style="width:1px;height:15px;background:#666;margin:0 5px 0 13px"></span><span style="letter-spacing:.7px">텍스트 옵션</span></div>
<div class=ics><div style="background:#6f6f6f;width:30px">${ico('pfill',28,28)}</div><div>${ico('ppent',24,24)}</div><div>${ico('psize',24,24)}</div><div>${ico('ppic',24,24)}</div></div>
<div class=ln><span class=nt></span></div>
<div class=b><div class=ct>
<pp-head>채우기</pp-head>
<div style="height:10px"></div>
<pp-radio>채우기 없음(<u>N</u>)</pp-radio><pp-radio>단색 채우기(<u>S</u>)</pp-radio><pp-radio>그라데이션 채우기(<u>G</u>)</pp-radio><pp-radio on>그림 또는 질감 채우기(<u>P</u>)</pp-radio><pp-radio>패턴 채우기(<u>A</u>)</pp-radio><pp-radio>슬라이드 배경 채우기(<u>B</u>)</pp-radio>
<div class=hr></div><div class=lb>그림 원본</div>
<div class=bt><div style="width:57px">삽입(<u>R</u>)</div><div style="width:82px">클립보드(<u>C</u>)</div></div>
<pp-field pl="30" h="27"><span slot=l>질감(<u>U</u>)</span><pp-drop w="44" h="27"><svg width="14" height="14" viewBox="0 0 14 14"><rect width="14" height="14" fill="#eee"/><path d="M1 1h4v4H1zM6 2h2v2H6zM1 6h2v2H1zM5 6h2v2H5zM9 5h2v2H9zM4 10h2v2H4zM8 9h2v2H8zM11 11h2v2h-2zM11 1h2v2h-2z" fill="#2e75b6"/></svg></pp-drop></pp-field>
<pp-field pl="30"><span slot=l style="margin-right:6px">투명도(<u>T</u>)</span><span class=sl><i></i></span><pp-spin v="0%"></pp-spin></pp-field>
<pp-check style="margin-top:4px">그림을 질감으로 바둑판식 배열(<u>I</u>)</pp-check>
<pp-field mt="4"><span slot=l>오프셋 X(<u>O</u>)</span><pp-spin v="0 pt"></pp-spin></pp-field>
<pp-field><span slot=l>오프셋 Y(<u>E</u>)</span><pp-spin v="0 pt"></pp-spin></pp-field>
<pp-field><span slot=l>배율 X(<u>X</u>)</span><pp-spin v="100%"></pp-spin></pp-field>
<pp-field><span slot=l>배율 Y(<u>Y</u>)</span><pp-spin v="100%"></pp-spin></pp-field>
<pp-field h="21"><span slot=l>맞춤(<u>L</u>)</span><pp-drop w="95" h="21">왼쪽 위</pp-drop></pp-field>
<pp-field h="21"><span slot=l>대칭 유형(<u>M</u>)</span><pp-drop w="55" h="21">없음</pp-drop></pp-field>
<pp-check style="margin-top:4px">도형과 함께 회전(<u>W</u>)</pp-check>
<pp-head style="margin-top:14px">선</pp-head>
<pp-radio on style="margin-top:10px">선 없음(<u>N</u>)</pp-radio>
</div><div class=sb><i>▲</i><b></b><span style="flex:1;background:#333"></span><i>▼</i></div></div>`);

def('pp-status',`:host{display:block;height:15px;border-top:1px solid #4d4d4d;box-sizing:border-box;overflow:hidden;position:relative;color:#ddd;line-height:19px;background:#262626}
.a{position:absolute;top:0;white-space:nowrap}.i{position:absolute;top:0}`,()=>{
const i=(n,x,s=15)=>`<span class=i style="left:${x}px">${ico(n,s)}</span>`;
return `<span class=a style="left:7px;letter-spacing:.5px">슬라이드 1/1</span>${i('note',96)}<span class=a style="left:128px">한국어</span>
${i('notes',978)}<span class=a style="left:996px">메모</span>${i('cmt',1039)}<span class=a style="left:1056px">메모</span>
<span class=a style="left:1099px;width:40px;height:15px;background:#565656"></span>${i('normal',1112)}${i('sorter',1152)}${i('read',1191)}${i('show',1231)}
<span class=a style="left:1264px;top:7px;width:9px;height:1px;background:#ddd"></span>
<span class=a style="left:1278px;top:7px;width:100px;height:1px;background:#eee"></span><span class=a style="left:1311px;top:3px;width:4px;height:10px;background:#fff"></span><span class=a style="left:1328px;top:5px;width:1px;height:6px;background:#ddd"></span>
<span class=a style="left:1382px;top:7px;width:9px;height:1px;background:#ddd"></span><span class=a style="left:1386px;top:3px;width:1px;height:9px;background:#ddd"></span>
<span class=a style="left:1404px;letter-spacing:0;font-size:13px">72%</span>${i('fit',1441)}`});

def('pp-app',`:host{display:block;width:1467px;height:887px;position:relative;overflow:hidden;background:#262626}
.m{display:flex;height:716px}.over{position:absolute;left:0;top:0;pointer-events:none}`,()=>`
<pp-titlebar></pp-titlebar><pp-tabs></pp-tabs><pp-ribbon></pp-ribbon>
<div class=m><pp-thumbs></pp-thumbs><pp-canvas></pp-canvas><pp-panel></pp-panel></div>
<pp-status></pp-status>
<pp-minibar></pp-minibar><pp-menu></pp-menu>
<svg class=over width="1467" height="887" viewBox="0 0 1467 887">
<path d="M1053 365L1196 388" stroke="#000" stroke-width="9"/><path d="M1054 365L1196 388" stroke="#f00" stroke-width="4.500"/>
<path d="M1212 391L1184 404L1190 388L1186 368z" fill="#f00" stroke="#000" stroke-width="3.500" stroke-linejoin="miter"/>
<path d="M279 660L418 798" stroke="#000" stroke-width="9"/><path d="M280 661L418 798" stroke="#f00" stroke-width="4.500"/>
<path d="M432 812L397 801L415 795L424 776z" fill="#f00" stroke="#000" stroke-width="3.500"/>
</svg>`);
</script>
</body></html>
